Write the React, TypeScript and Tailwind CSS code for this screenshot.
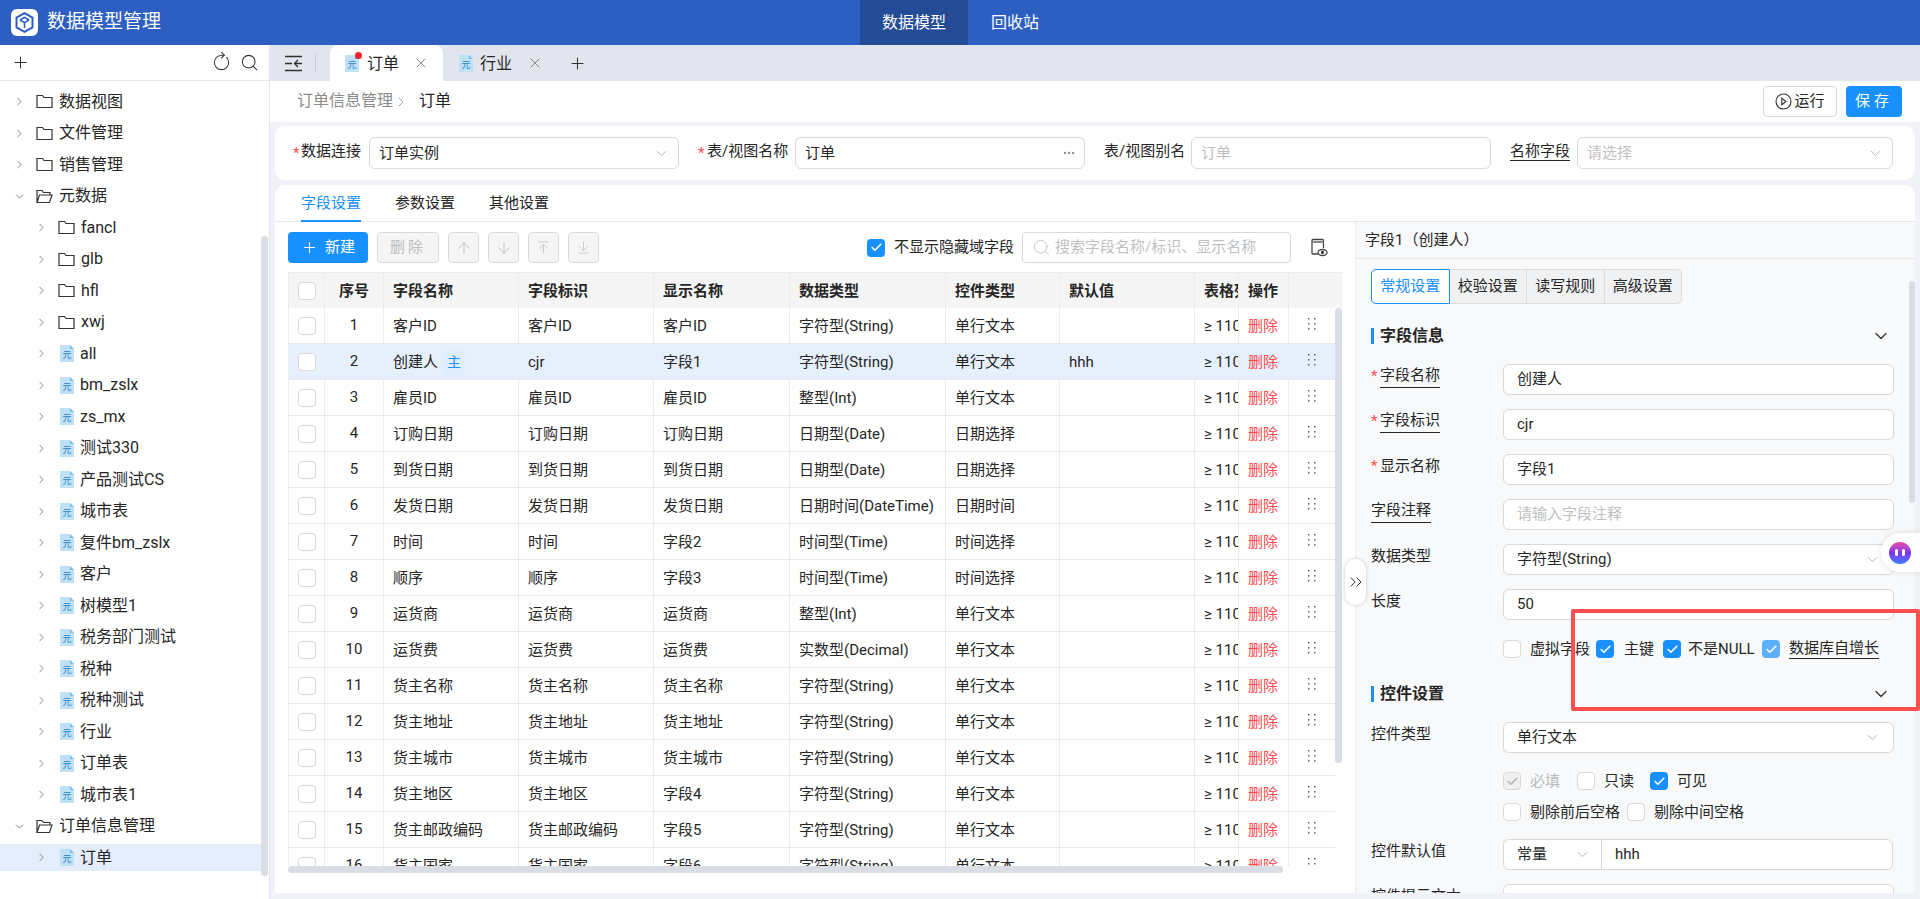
import { ArrowDown, ArrowDownToLine, ArrowUp, ArrowUpToLine, Check, ChevronDown, ChevronRight, ChevronsRight, Ellipsis, Plus, RotateCw, Search, X } from "lucide-react";

type TreeNode = { name: string; level: number; kind: "folder" | "open" | "file"; selected?: boolean };

const tree: TreeNode[] = [
  { name: "数据视图", level: 0, kind: "folder" },
  { name: "文件管理", level: 0, kind: "folder" },
  { name: "销售管理", level: 0, kind: "folder" },
  { name: "元数据", level: 0, kind: "open" },
  { name: "fancl", level: 1, kind: "folder" },
  { name: "glb", level: 1, kind: "folder" },
  { name: "hfl", level: 1, kind: "folder" },
  { name: "xwj", level: 1, kind: "folder" },
  ...["all", "bm_zslx", "zs_mx", "测试330", "产品测试CS", "城市表", "复件bm_zslx", "客户", "树模型1", "税务部门测试", "税种", "税种测试", "行业", "订单表", "城市表1"].map(
    (name): TreeNode => ({ name, level: 1, kind: "file" }),
  ),
  { name: "订单信息管理", level: 0, kind: "open" },
  { name: "订单", level: 1, kind: "file", selected: true },
];

const S = "字符型(String)";
const T = "单行文本";
const rows = [
  ["客户ID", "客户ID", "客户ID", S, T, ""],
  ["创建人", "cjr", "字段1", S, T, "hhh"],
  ["雇员ID", "雇员ID", "雇员ID", "整型(Int)", T, ""],
  ["订购日期", "订购日期", "订购日期", "日期型(Date)", "日期选择", ""],
  ["到货日期", "到货日期", "到货日期", "日期型(Date)", "日期选择", ""],
  ["发货日期", "发货日期", "发货日期", "日期时间(DateTime)", "日期时间", ""],
  ["时间", "时间", "字段2", "时间型(Time)", "时间选择", ""],
  ["顺序", "顺序", "字段3", "时间型(Time)", "时间选择", ""],
  ["运货商", "运货商", "运货商", "整型(Int)", T, ""],
  ["运货费", "运货费", "运货费", "实数型(Decimal)", T, ""],
  ["货主名称", "货主名称", "货主名称", S, T, ""],
  ["货主地址", "货主地址", "货主地址", S, T, ""],
  ["货主城市", "货主城市", "货主城市", S, T, ""],
  ["货主地区", "货主地区", "字段4", S, T, ""],
  ["货主邮政编码", "货主邮政编码", "字段5", S, T, ""],
  ["货主国家", "货主国家", "字段6", S, T, ""],
];

function FolderIcon({ open }: { open?: boolean }) {
  return (
    <svg width="17" height="15" viewBox="0 0 17 15" fill="none" stroke="#333" strokeWidth="1.2" className="shrink-0">
      {open ? (
        <path d="M1 13.5V1.5h5l1.5 2H14v2.5M1 13.5h12.5L16 6H3.5L1 13.5z" />
      ) : (
        <path d="M1 1.5h5.5l1.5 2h8v10H1z" />
      )}
    </svg>
  );
}

function FileIcon() {
  return (
    <svg width="14" height="17" viewBox="0 0 14 17" className="shrink-0">
      <path d="M0 0h10l4 4v13H0z" fill="#bfe1f6" />
      <path d="M10 0l4 4h-4z" fill="#7cc0ea" />
      <text x="7" y="13" textAnchor="middle" fontSize="9" fill="#1f7fc4" fontFamily="Noto Sans CJK SC">
        元
      </text>
    </svg>
  );
}

function Logo() {
  return (
    <div className="w-[27px] h-[27px] bg-white rounded-[6px] flex items-center justify-center">
      <svg width="19" height="21" viewBox="0 0 19 21" fill="none" stroke="#2c5fc1" strokeWidth="2">
        <path d="M9.5 1.2l8 4.4v9.8l-8 4.4-8-4.4V5.6z" />
        <path d="M5 8l4.5 2.6L14 8M9.5 10.6V16M5 8l4.5-2.6L14 8" strokeWidth="1.6" />
      </svg>
    </div>
  );
}

function Box({ on, light, disabled }: { on?: boolean; light?: boolean; disabled?: boolean }) {
  if (disabled)
    return (
      <span className="w-[18px] h-[18px] shrink-0 rounded-[4px] border border-[#d9d9d9] bg-[#f0f0f0] flex items-center justify-center">
        <Check size={13} strokeWidth={3} className="text-[#b5b5b5]" />
      </span>
    );
  if (on)
    return (
      <span className={`w-[18px] h-[18px] shrink-0 rounded-[4px] flex items-center justify-center ${light ? "bg-[#5cb0ff]" : "bg-[#1890ff]"}`}>
        <Check size={13} strokeWidth={3} className="text-white" />
      </span>
    );
  return <span className="w-[18px] h-[18px] shrink-0 rounded-[4px] border border-[#d9d9d9] bg-white" />;
}

function Check2({ label, on, light, disabled, under, gap, w }: { label: string; on?: boolean; light?: boolean; disabled?: boolean; under?: boolean; gap: string; w: string }) {
  return (
    <div className={`flex items-center shrink-0 ${w}`}>
      <Box on={on} light={light} disabled={disabled} />
      <span className={`${gap} whitespace-nowrap ${disabled ? "text-[#bbb]" : "text-[#262626]"} ${under ? "border-b border-[#262626] leading-[19px]" : ""}`}>{label}</span>
    </div>
  );
}

function Arrow({ children }: { children: React.ReactNode }) {
  return (
    <div className="h-[31px] w-[31px] rounded-[4px] border border-[#d9d9d9] bg-[#f5f5f5] flex items-center justify-center text-[#bdbdbd]">
      {children}
    </div>
  );
}

function Dots() {
  return (
    <svg width="9" height="14" viewBox="0 0 9 14" fill="#666">
      <rect x="1" y="1" width="1.5" height="1.5" />
      <rect x="7" y="1" width="1.5" height="1.5" />
      <rect x="1" y="6" width="1.5" height="1.5" />
      <rect x="7" y="6" width="1.5" height="1.5" />
      <rect x="1" y="11" width="1.5" height="1.5" />
      <rect x="7" y="11" width="1.5" height="1.5" />
    </svg>
  );
}

function Field({ label, req, under, value, placeholder, select }: { label: string; req?: boolean; under?: boolean; value?: string; placeholder?: string; select?: boolean }) {
  return (
    <div className="flex h-[31px] shrink-0">
      <div className="w-[132px] flex items-start pt-[1px] leading-[22px] shrink-0">
        {req && <span className="text-[#ff4d4f] w-[9px]">*</span>}
        <span className={under ? "border-b border-[#262626] leading-[21px] h-[23px]" : ""}>{label}</span>
      </div>
      <div className="w-[391px] h-[31px] bg-white border border-[#d9d9d9] rounded-[6px] pl-[13px] pr-[12px] flex items-center justify-between">
        <span className={placeholder ? "text-[#bfbfbf]" : ""}>{value ?? placeholder}</span>
        {select && <ChevronDown size={17} strokeWidth={1.2} className="text-[#aaa]" />}
      </div>
    </div>
  );
}

function Section({ title }: { title: string }) {
  return (
    <div className="flex items-center justify-between h-[16px] shrink-0 pr-[18px]">
      <div className="border-l-[3px] border-[#1890ff] pl-[6px] h-[16px] flex items-center font-bold text-[16px] text-[#262626]">{title}</div>
      <ChevronDown size={20} strokeWidth={1.5} className="text-[#333]" />
    </div>
  );
}

function Select({ w, value, placeholder, more, plain }: { w: string; value?: string; placeholder?: string; more?: boolean; plain?: boolean }) {
  return (
    <div className={`${w} h-[32px] shrink-0 bg-white border border-[#d9d9d9] rounded-[6px] pl-[9px] pr-[8px] flex items-center justify-between`}>
      <span className={placeholder ? "text-[#bfbfbf]" : ""}>{value ?? placeholder}</span>
      {more && <Ellipsis size={14} className="text-[#888]" />}
      {!more && !plain && <ChevronDown size={17} strokeWidth={1.2} className="text-[#aaa]" />}
    </div>
  );
}

export default function App() {
  return (
    <div className="font-['Roboto','Noto_Sans_CJK_SC',sans-serif] relative w-[1920px] h-[899px] overflow-hidden text-[15px] text-[#262626] bg-[#f0f2f7] flex flex-col">
      {/* top bar */}
      <header className="h-[45px] shrink-0 bg-[#2c5fc1] flex items-center text-white">
        <div className="w-[860px] pl-[11px] flex items-center gap-[9px]">
          <Logo />
          <span className="text-[19px]">数据模型管理</span>
        </div>
        <div className="w-[108px] h-full bg-[#234b96] flex items-center justify-center text-[16px]">数据模型</div>
        <div className="ml-[23px] text-[16px]">回收站</div>
      </header>

      <div className="flex-1 flex min-h-0">
        {/* tree */}
        <aside className="w-[270px] shrink-0 bg-white border-r border-[#e4e6ec] flex flex-col text-[16px]">
          <div className="h-[36px] shrink-0 border-b border-[#e8e8e8] flex items-center pl-[11px] pr-[10px] text-[#333]">
            <Plus size={19} strokeWidth={1.3} />
            <RotateCw size={19} strokeWidth={1.3} className="ml-auto -rotate-45" />
            <Search size={19} strokeWidth={1.3} className="ml-[9px]" />
          </div>
          <div className="flex-1 flex min-h-0 pt-[7px]">
            <div className="w-[261px] shrink-0">
              {tree.map((n) => (
                <div key={n.name + n.level} className={`h-[27px] mb-[4.5px] flex items-center ${n.selected ? "bg-[#e3edfb]" : ""} ${n.level ? "pl-[35px]" : "pl-[13px]"}`}>
                  {n.kind === "open" ? (
                    <ChevronDown size={13} strokeWidth={1.3} className="text-[#555] w-[13px] shrink-0" />
                  ) : (
                    <ChevronRight size={13} strokeWidth={1.3} className="text-[#555] w-[13px] shrink-0" />
                  )}
                  <span className={n.kind === "file" ? "ml-[12px]" : "ml-[10px]"}>{n.kind === "file" ? <FileIcon /> : <FolderIcon open={n.kind === "open"} />}</span>
                  <span className="ml-[6px] whitespace-nowrap">{n.name}</span>
                </div>
              ))}
            </div>
            <div className="w-[7px] h-[640px] mt-[148px] rounded-full bg-[#dadde3]" />
          </div>
        </aside>

        <main className="flex-1 min-w-0 flex flex-col">
          {/* tabs */}
          <div className="h-[36px] shrink-0 bg-[#e2e5ee] flex items-end text-[16px]">
            <div className="w-[60px] h-full flex items-center pl-[15px]">
              <svg width="18" height="17" viewBox="0 0 18 17" fill="none" stroke="#333" strokeWidth="1.3">
                <path d="M0 1.5h17M0 8.5h7M0 15.5h17M17 8.5h-7M13 5l-3.5 3.5L13 12" />
              </svg>
              <span className="ml-[12px] w-px h-[20px] bg-[#c8ccd4]" />
            </div>
            <div className="w-[113px] h-[36px] bg-white rounded-t-[8px] flex items-center pl-[15px]">
              <span className="relative flex">
                <FileIcon />
                <span className="absolute -top-[3px] -right-[3px] w-[7px] h-[7px] rounded-full bg-[#f5222d]" />
              </span>
              <span className="ml-[8px] pt-[1px]">订单</span>
              <X size={16} strokeWidth={1.3} className="ml-[14px] text-[#777]" />
            </div>
            <div className="w-[113px] h-full flex items-center pl-[16px]">
              <FileIcon />
              <span className="ml-[7px] pt-[1px]">行业</span>
              <X size={16} strokeWidth={1.3} className="ml-[15px] text-[#777]" />
            </div>
            <div className="h-full flex items-center ml-[12px]">
              <Plus size={19} strokeWidth={1.3} className="text-[#333]" />
            </div>
          </div>

          {/* breadcrumb */}
          <div className="h-[41px] shrink-0 bg-white flex items-center pl-[27px] pr-[18px] text-[16px]">
            <span className="text-[#8c8c8c] -mt-[1px]">订单信息管理</span>
            <ChevronRight size={16} strokeWidth={1.2} className="text-[#8c8c8c]" />
            <span className="ml-[10px] text-[#222] -mt-[1px]">订单</span>
            <div className="ml-auto h-[31px] w-[74px] border border-[#d9d9d9] rounded-[4px] flex items-center justify-center gap-[2px] text-[15px]">
              <svg width="17" height="17" viewBox="0 0 17 17" fill="none" stroke="#333" strokeWidth="1.1">
                <circle cx="8.5" cy="8.5" r="7.5" />
                <path d="M6.8 5.2l4.2 3.3-4.2 3.3z" />
              </svg>
              运行
            </div>
            <div className="ml-[9px] h-[31px] w-[56px] rounded-[4px] bg-[#1890ff] text-white flex items-center justify-center text-[15px] tracking-[4px]">保存</div>
          </div>

          {/* connection form */}
          <div className="h-[54px] shrink-0 mt-[4px] ml-[5px] mr-[5px] bg-white rounded-[10px] flex items-center pl-[18px]">
            <span className="text-[#ff4d4f] w-[8px]">*</span>
            <span className="w-[68px] -mt-[4px]">数据连接</span>
            <Select w="w-[310px]" value="订单实例" />
            <span className="text-[#ff4d4f] ml-[19px] w-[9px]">*</span>
            <span className="w-[88px] -mt-[4px] whitespace-nowrap">表/视图名称</span>
            <Select w="w-[290px]" value="订单" more />
            <span className="ml-[19px] w-[87px] -mt-[4px] whitespace-nowrap">表/视图别名</span>
            <Select w="w-[300px]" placeholder="订单" plain />
            <span className="ml-[19px] w-[67px] -mt-[4px]">
              <span className="border-b border-[#262626]">名称字段</span>
            </span>
            <Select w="w-[316px]" placeholder="请选择" />
          </div>

          {/* main card */}
          <div className="flex-1 min-h-0 mt-[5px] mb-[6px] ml-[5px] mr-[5px] bg-white rounded-t-[10px] flex flex-col overflow-hidden">
            <div className="h-[37px] shrink-0 border-b border-[#e8e8e8] flex pl-[26px] gap-[34px]">
              <div className="h-[37px] text-[#1890ff] border-b-2 border-[#1890ff] leading-[36px]">字段设置</div>
              <div className="leading-[36px]">参数设置</div>
              <div className="leading-[36px]">其他设置</div>
            </div>
            <div className="flex-1 min-h-0 flex">
              {/* fields table */}
              <div className="w-[1080px] shrink-0 pl-[13px] pt-[10px]">
                <div className="flex items-center h-[31px] w-[1054px]">
                  <div className="w-[80px] h-[31px] rounded-[4px] bg-[#1890ff] text-white flex items-center justify-center gap-[7px]">
                    <Plus size={17} strokeWidth={1.5} />
                    新建
                  </div>
                  <div className="ml-[9px] w-[62px] h-[31px] rounded-[4px] border border-[#d9d9d9] bg-[#f5f5f5] text-[#bdbdbd] flex items-center justify-center tracking-[3px]">删除</div>
                  <div className="ml-[9px] flex gap-[9px]">
                    <Arrow>
                      <ArrowUp size={18} strokeWidth={1.2} />
                    </Arrow>
                    <Arrow>
                      <ArrowDown size={18} strokeWidth={1.2} />
                    </Arrow>
                    <Arrow>
                      <ArrowUpToLine size={15} strokeWidth={1.2} />
                    </Arrow>
                    <Arrow>
                      <ArrowDownToLine size={15} strokeWidth={1.2} />
                    </Arrow>
                  </div>
                  <div className="ml-[268px] flex items-center">
                    <Box on />
                    <span className="ml-[9px] whitespace-nowrap">不显示隐藏域字段</span>
                  </div>
                  <div className="ml-[8px] w-[269px] h-[31px] border border-[#d9d9d9] rounded-[4px] flex items-center pl-[9px] gap-[4px] text-[#bfbfbf]">
                    <Search size={19} strokeWidth={1.1} />
                    <span className="whitespace-nowrap">搜索字段名称/标识、显示名称</span>
                  </div>
                  <svg width="18" height="19" viewBox="0 0 18 19" fill="none" className="ml-[19px]" stroke="#444" strokeWidth="1.3">
                    <path d="M8 16H3a1 1 0 0 1-1-1V2.5a1 1 0 0 1 1-1h9.5a1 1 0 0 1 1 1V10" />
                    <path d="M2 4h11.5" strokeWidth="2" stroke="#888" />
                    <ellipse cx="12.5" cy="14.5" rx="4.5" ry="3" />
                    <circle cx="12.5" cy="14.5" r="1" fill="#444" />
                  </svg>
                </div>
                <div className="grid grid-cols-[37px_59px_135px_135px_136px_156px_114px_135px_44px_50px_53px] mt-[9px] w-[1054px] h-[36px] bg-[#f5f5f5] border-t border-[#ececec] font-bold text-[#262626]">
                  <div className="border-l border-[#ececec] flex items-center justify-center border-r">
                    <Box />
                  </div>
                  {["序号", "字段名称", "字段标识", "显示名称", "数据类型", "控件类型", "默认值", "表格列宽", "操作", ""].map((h, i) => (
                    <div key={h + i} className={`border-r border-[#ececec] flex items-center pt-[1px] overflow-hidden whitespace-nowrap ${i === 0 ? "justify-center" : "pl-[9px]"}`}>
                      {h}
                    </div>
                  ))}
                </div>
                <div className="flex h-[558px] w-[1054px] overflow-hidden">
                  <div className="w-[1047px] shrink-0 overflow-hidden">
                    {rows.map((r, i) => (
                      <div key={i} className={`grid grid-cols-[37px_59px_135px_135px_136px_156px_114px_135px_44px_50px_46px] h-[36px] border-b border-[#ececec] ${i === 1 ? "bg-[#e6f0fc]" : "bg-white"}`}>
                        <div className="border-l border-r border-[#ececec] flex items-center justify-center pt-[1px]">
                          <Box />
                        </div>
                        <div className="border-r border-[#ececec] flex items-center justify-center">{i + 1}</div>
                        {r.map((c, j) => (
                          <div key={j} className="border-r border-[#ececec] flex items-center pl-[9px] pt-[2px] whitespace-nowrap overflow-hidden">
                            {c}
                            {i === 1 && j === 0 && <span className="ml-[5px] w-[22px] h-[26px] bg-[#e0edfc] text-[#1890ff] text-[14px] flex items-center justify-center">主</span>}
                          </div>
                        ))}
                        <div className="border-r border-[#ececec] flex items-center pl-[9px] pt-[2px] overflow-hidden whitespace-nowrap">≥ 1100</div>
                        <div className="border-r border-[#ececec] flex items-center pl-[9px] pt-[2px] text-[#ff4d4f]">删除</div>
                        <div className="flex items-start pt-[9px] pl-[18px]">
                          <Dots />
                        </div>
                      </div>
                    ))}
                  </div>
                  <div className="w-[7px] h-[455px] rounded-full bg-[#dadde3]" />
                </div>
                <div className="w-[995px] h-[7px] rounded-full bg-[#dadde3]" />
              </div>

              {/* field properties */}
              <div className="flex-1 min-w-0 border-l border-[#ececec] bg-[#f8f9fb] flex flex-col">
                <div className="h-[37px] shrink-0 border-b border-[#e8e8e8] flex items-center pl-[9px]">字段1（创建人）</div>
                <div className="flex-1 min-h-0 flex overflow-hidden">
                  <div className="flex-1 min-w-0 pl-[15px] pt-[10px] flex flex-col overflow-hidden">
                    <div className="flex h-[35px] shrink-0 w-[311px] border border-[#dcdcdc] rounded-[5px] bg-[#f0f1f3]">
                      {["常规设置", "校验设置", "读写规则", "高级设置"].map((t, i) => (
                        <div key={t} className={`flex-1 flex items-center justify-center -my-px ${i === 0 ? "-ml-px bg-white border border-[#1890ff] rounded-l-[5px] text-[#1890ff]" : "border-r border-[#dcdcdc] last:border-r-0"}`}>
                          {t}
                        </div>
                      ))}
                    </div>
                    <div className="mt-[24px]">
                      <Section title="字段信息" />
                    </div>
                    <div className="mt-[20px] flex flex-col gap-[14px]">
                      <Field label="字段名称" req under value="创建人" />
                      <Field label="字段标识" req under value="cjr" />
                      <Field label="显示名称" req value="字段1" />
                      <Field label="字段注释" under placeholder="请输入字段注释" />
                      <Field label="数据类型" value="字符型(String)" select />
                      <Field label="长度" value="50" />
                    </div>
                    <div className="mt-[20px] ml-[132px] flex items-center h-[18px] shrink-0">
                      <Check2 label="虚拟字段" gap="ml-[9px]" w="w-[93px]" />
                      <Check2 label="主键" on gap="ml-[10px]" w="w-[67px]" />
                      <Check2 label="不是NULL" on gap="ml-[7px]" w="w-[99px]" />
                      <Check2 label="数据库自增长" on light under gap="ml-[9px]" w="w-[120px]" />
                    </div>
                    <div className="mt-[28px]">
                      <Section title="控件设置" />
                    </div>
                    <div className="mt-[20px]">
                      <Field label="控件类型" value="单行文本" select />
                    </div>
                    <div className="mt-[19px] ml-[132px] flex items-center h-[18px] shrink-0">
                      <Check2 label="必填" disabled gap="ml-[9px]" w="w-[74px]" />
                      <Check2 label="只读" gap="ml-[9px]" w="w-[73px]" />
                      <Check2 label="可见" on gap="ml-[9px]" w="w-[60px]" />
                    </div>
                    <div className="mt-[13px] ml-[132px] flex items-center h-[18px] shrink-0">
                      <Check2 label="剔除前后空格" gap="ml-[9px]" w="w-[124px]" />
                      <Check2 label="剔除中间空格" gap="ml-[9px]" w="w-[120px]" />
                    </div>
                    <div className="mt-[18px] flex h-[31px] shrink-0">
                      <div className="w-[132px] pt-[1px] leading-[22px]">控件默认值</div>
                      <div className="w-[390px] h-[31px] bg-white border border-[#d9d9d9] rounded-[6px] flex items-center">
                        <div className="w-[98px] h-full border-r border-[#d9d9d9] pl-[13px] pr-[10px] flex items-center justify-between">
                          常量
                          <ChevronDown size={17} strokeWidth={1.2} className="text-[#aaa]" />
                        </div>
                        <span className="pl-[13px]">hhh</span>
                      </div>
                    </div>
                    <div className="mt-[14px] flex h-[31px] shrink-0">
                      <div className="w-[132px] pt-[1px] leading-[22px]">控件提示文本</div>
                      <div className="w-[391px] h-[31px] bg-white border border-[#d9d9d9] rounded-[6px]" />
                    </div>
                  </div>
                  <div className="w-[6px] shrink-0 h-[222px] mt-[22px] rounded-full bg-[#dadde3]" />
                </div>
              </div>
            </div>
          </div>
        </main>
      </div>

      {/* overlays */}
      <div className="absolute left-[1345px] top-[559px] w-[21px] h-[46px] rounded-full bg-white shadow-[0_0_4px_rgba(0,0,0,0.2)] flex items-center justify-center text-[#333]">
        <ChevronsRight size={20} strokeWidth={1.2} />
      </div>
      <div className="absolute right-0 top-[533px] w-[39px] h-[39px] rounded-l-full bg-white shadow-[0_0_6px_rgba(0,0,0,0.12)] flex items-center pl-[8px]">
        <div className="w-[22px] h-[22px] rounded-full bg-linear-to-b from-[#f03fa0] via-[#7a30f0] to-[#2f7cff] flex items-center justify-center gap-[4px]">
          <span className="w-[3px] h-[7px] rounded-full bg-white" />
          <span className="w-[3px] h-[7px] rounded-full bg-white" />
        </div>
      </div>
      <div className="absolute left-[1571px] top-[609px] w-[349px] h-[102px] border-[4px] border-[#ff5050] rounded-[2px] pointer-events-none" />
    </div>
  );
}
